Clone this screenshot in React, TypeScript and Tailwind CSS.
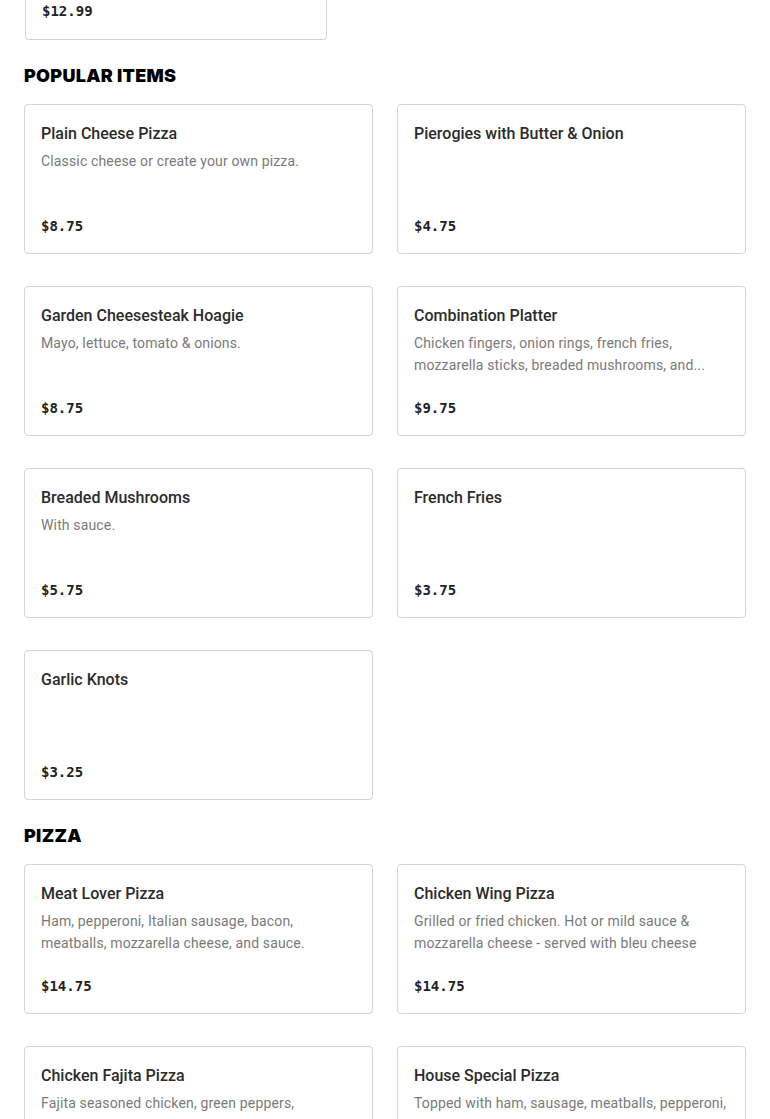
import React from "react";

type Item = { name: string; desc?: string; price: string };

const popular: Item[] = [
  { name: "Plain Cheese Pizza", desc: "Classic cheese or create your own pizza.", price: "$8.75" },
  { name: "Pierogies with Butter & Onion", price: "$4.75" },
  { name: "Garden Cheesesteak Hoagie", desc: "Mayo, lettuce, tomato & onions.", price: "$8.75" },
  {
    name: "Combination Platter",
    desc: "Chicken fingers, onion rings, french fries, mozzarella sticks, breaded mushrooms, and...",
    price: "$9.75",
  },
  { name: "Breaded Mushrooms", desc: "With sauce.", price: "$5.75" },
  { name: "French Fries", price: "$3.75" },
  { name: "Garlic Knots", price: "$3.25" },
];

const pizza: Item[] = [
  {
    name: "Meat Lover Pizza",
    desc: "Ham, pepperoni, Italian sausage, bacon, meatballs, mozzarella cheese, and sauce.",
    price: "$14.75",
  },
  {
    name: "Chicken Wing Pizza",
    desc: "Grilled or fried chicken. Hot or mild sauce & mozzarella cheese - served with bleu cheese",
    price: "$14.75",
  },
  {
    name: "Chicken Fajita Pizza",
    desc: "Fajita seasoned chicken, green peppers, jalapeños, onions...",
    price: "$14.75",
  },
  {
    name: "House Special Pizza",
    desc: "Topped with ham, sausage, meatballs, pepperoni, green peppers, onions, and mozzarella cheese.",
    price: "$15.75",
  },
];

function Card({ item }: { item: Item }) {
  return (
    <div className="flex h-[150px] flex-col rounded-[4px] border border-[#d4d4d4] bg-white px-4 pt-[17px] pb-4">
      <div className="text-[16px] leading-[24px] font-medium text-[#2b2b2b] [font-family:Roboto,'Noto_Sans',sans-serif]">
        {item.name}
      </div>
      {item.desc && (
        <div className="mt-1 line-clamp-2 text-[14px] leading-[22px] text-[#7a7a7a] [font-family:Roboto,'Noto_Sans',sans-serif] tracking-[0.15px]">
          {item.desc}
        </div>
      )}
      <div className="mt-auto text-[14px] leading-[22px] font-bold text-[#222] [font-family:'DejaVu_Sans_Mono',monospace]">
        {item.price}
      </div>
    </div>
  );
}

function Section({ title, items }: { title: string; items: Item[] }) {
  return (
    <div>
      <h2 className="mt-6 mb-4 text-[18px] leading-[24px] font-black uppercase tracking-[0.3px] text-black [font-family:Inter,'Liberation_Sans',sans-serif]">
        {title}
      </h2>
      <div className="grid grid-cols-2 gap-x-6 gap-y-8">
        {items.map((it) => (
          <Card key={it.name} item={it} />
        ))}
      </div>
    </div>
  );
}

export default function App() {
  return (
    <div className="h-[1119px] overflow-hidden bg-white px-6">
      <div className="ml-px flex h-[40px] w-[302px] items-end rounded-b-[4px] border border-t-0 border-[#d4d4d4] px-4 pb-[17px]">
        <div className="text-[14px] leading-[22px] font-bold text-[#222] [font-family:'DejaVu_Sans_Mono',monospace]">
          $12.99
        </div>
      </div>
      <Section title="Popular Items" items={popular} />
      <Section title="Pizza" items={pizza} />
    </div>
  );
}
